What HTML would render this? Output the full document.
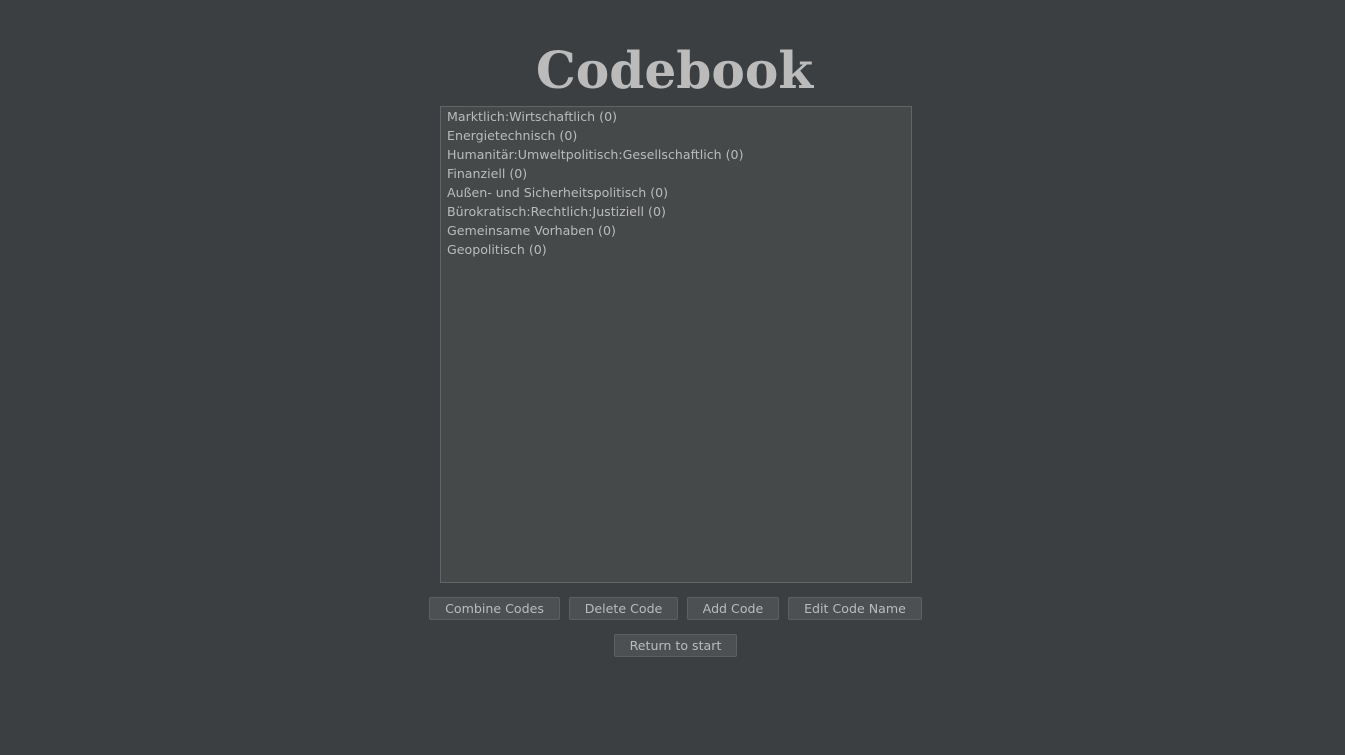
<!DOCTYPE html>
<html><head><meta charset="utf-8"><style>
body{margin:0;width:1345px;height:755px;background:#3c3f41;overflow:hidden;font-family:"DejaVu Sans",sans-serif;color:#bbbbbb}
h1{position:absolute;left:0;width:1349px;top:39px;margin:0;text-align:center;font-family:"DejaVu Serif",serif;font-weight:bold;font-size:50.2px;line-height:64px;color:#bbbbbb}
.list{position:absolute;left:440px;top:106px;width:470px;height:475px;background:#45494a;border:1px solid #646464}
.list div{position:absolute;left:6px;font-size:12.6px;line-height:19px;white-space:nowrap}
.b{position:absolute;height:21px;border:1px solid #5e6060;border-radius:2px;background:#4c5052;font-size:12.6px;line-height:22px;text-align:center;color:#bbbbbb;box-sizing:content-box}
</style></head><body>
<h1>Codebook</h1>
<div class="list">
<div style="top:0">Marktlich:Wirtschaftlich (0)</div>
<div style="top:19px">Energietechnisch (0)</div>
<div style="top:38px">Humanitär:Umweltpolitisch:Gesellschaftlich (0)</div>
<div style="top:57px">Finanziell (0)</div>
<div style="top:76px">Außen- und Sicherheitspolitisch (0)</div>
<div style="top:95px">Bürokratisch:Rechtlich:Justiziell (0)</div>
<div style="top:114px">Gemeinsame Vorhaben (0)</div>
<div style="top:133px">Geopolitisch (0)</div>
</div>
<div class="b" style="left:429px;top:597px;width:129px">Combine Codes</div>
<div class="b" style="left:569px;top:597px;width:107px">Delete Code</div>
<div class="b" style="left:687px;top:597px;width:90px">Add Code</div>
<div class="b" style="left:788px;top:597px;width:132px">Edit Code Name</div>
<div class="b" style="left:614px;top:634px;width:121px">Return to start</div>
</body></html>
